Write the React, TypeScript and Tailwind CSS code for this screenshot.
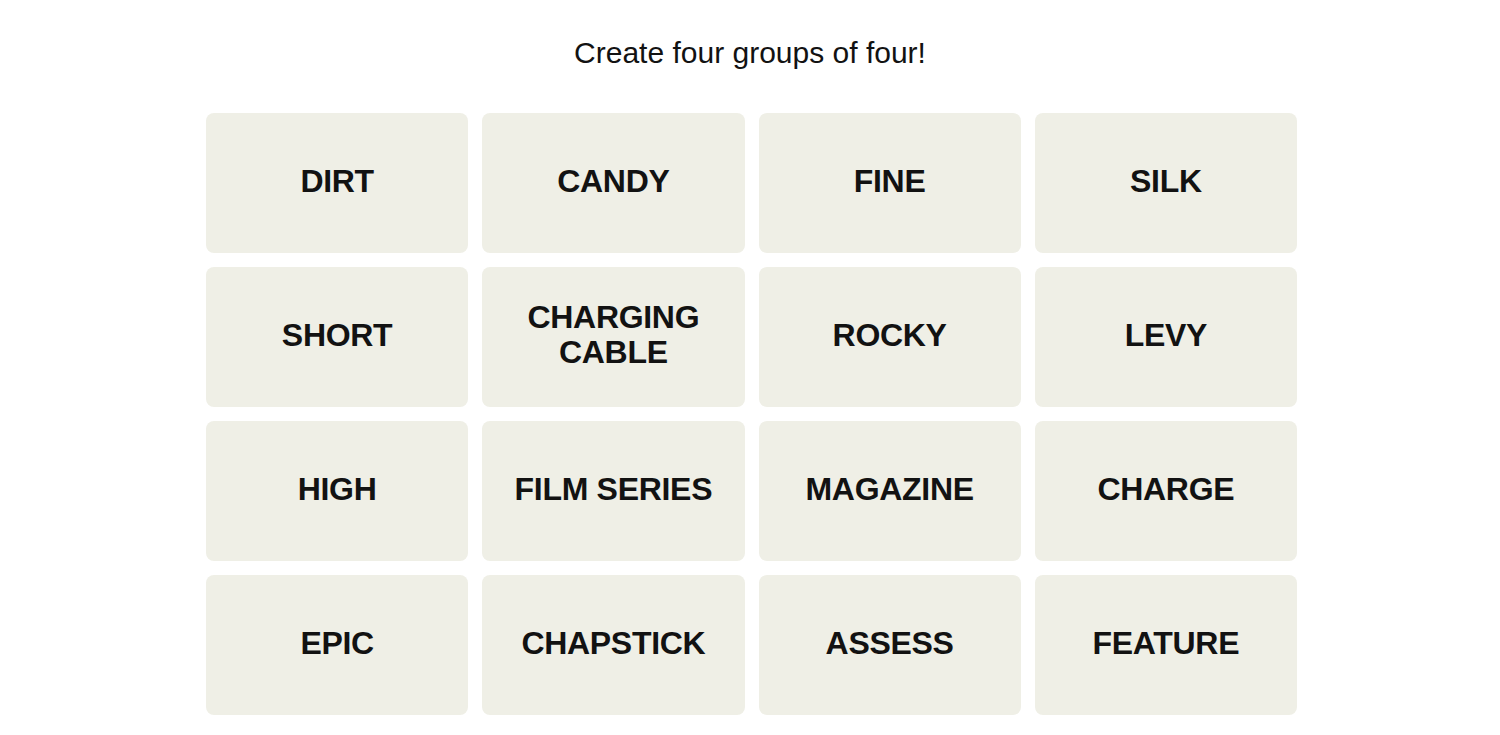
const words = [
  "DIRT", "CANDY", "FINE", "SILK",
  "SHORT", "CHARGING CABLE", "ROCKY", "LEVY",
  "HIGH", "FILM SERIES", "MAGAZINE", "CHARGE",
  "EPIC", "CHAPSTICK", "ASSESS", "FEATURE",
];

function Tile({ word }: { word: string }) {
  return (
    <button className="h-[140px] rounded-[8px] bg-[#efefe6] flex items-center justify-center px-4 pb-[4px] text-center">
      <span className="text-[32px] leading-[35px] font-bold tracking-[-0.3px] text-[#121212] uppercase max-w-[230px]">
        {word}
      </span>
    </button>
  );
}

export default function App() {
  return (
    <div className="min-h-[735px] bg-white font-['Liberation_Sans',Arial,sans-serif]">
      <h1 className="pt-[35px] text-center text-[30px] leading-[36px] font-normal text-[#121212]">
        Create four groups of four!
      </h1>
      <div className="mt-[42px] ml-[206px] w-[1091px] grid grid-cols-4 gap-x-[14px] gap-y-[14px]">
        {words.map((w) => (
          <Tile key={w} word={w} />
        ))}
      </div>
    </div>
  );
}
